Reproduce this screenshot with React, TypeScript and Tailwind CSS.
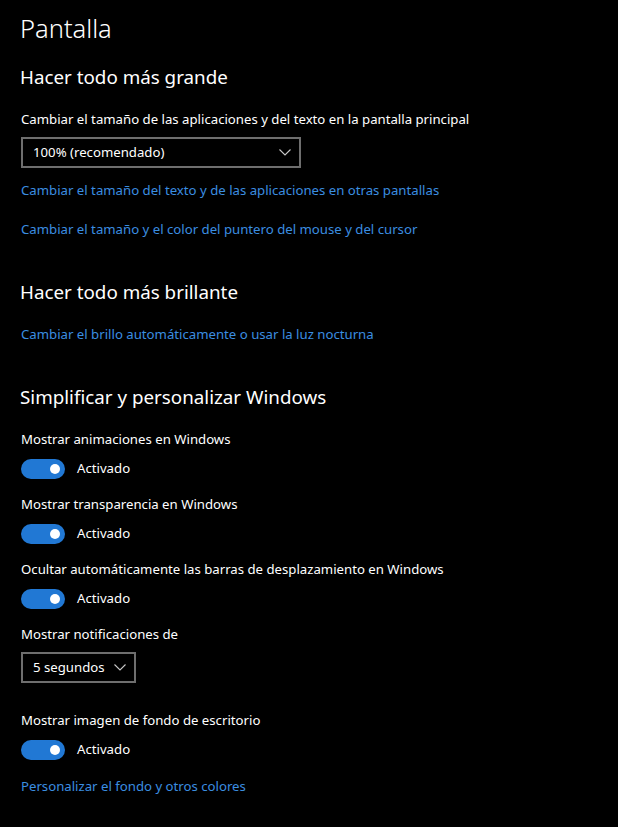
import { useState } from 'react'

function Chevron() {
  return (
    <svg width="12" height="7" viewBox="0 0 12 7" fill="none">
      <path d="M0.5 0.5l5.5 5.5 5.5-5.5" stroke="#c8c8c8" strokeWidth="1.1" />
    </svg>
  )
}

function Toggle({ label }: { label: string }) {
  const [on, setOn] = useState(true)
  return (
    <button onClick={() => setOn(!on)} className="flex items-center gap-3 h-[30px]">
      <span
        className={`flex items-center w-[44px] h-[20px] rounded-full px-[5px] ${
          on ? 'bg-[#2178d4] justify-end' : 'border-2 border-white justify-start'
        }`}
      >
        <span className="w-[10px] h-[10px] rounded-full bg-white" />
      </span>
      <span className="text-[13.2px] text-white">{on ? label : 'Desactivado'}</span>
    </button>
  )
}

function Link({ children }: { children: string }) {
  return <a className="block text-[13.2px] text-[#3b8ee0] leading-[20px] cursor-pointer">{children}</a>
}

export default function App() {
  return (
    <div
      className="min-h-screen w-[618px] bg-black text-white pl-[21px] pt-[11px] pb-8"
      style={{ fontFamily: '"Segoe UI", "Noto Sans", sans-serif' }}
    >
      <h1 className="text-[25.5px] font-light leading-[34px] -ml-[1px]">Pantalla</h1>

      <h2 className="text-[18.8px] leading-[28px] mt-[18px] -ml-[1px]">Hacer todo más grande</h2>
      <p className="text-[13.2px] leading-[20px] mt-[18px]">
        Cambiar el tamaño de las aplicaciones y del texto en la pantalla principal
      </p>
      <div className="mt-[8px] w-[280px] h-[31px] border-2 border-[#6e6e6e] flex items-center justify-between pl-[10px] pr-[8px]">
        <span className="text-[13.2px]">100% (recomendado)</span>
        <Chevron />
      </div>
      <div className="mt-[12px] flex flex-col gap-[19px]">
        <Link>Cambiar el tamaño del texto y de las aplicaciones en otras pantallas</Link>
        <Link>Cambiar el tamaño y el color del puntero del mouse y del cursor</Link>
      </div>

      <h2 className="text-[18.8px] leading-[28px] mt-[39px] -ml-[1px]">Hacer todo más brillante</h2>
      <div className="mt-[18px]">
        <Link>Cambiar el brillo automáticamente o usar la luz nocturna</Link>
      </div>

      <h2 className="text-[18.8px] leading-[28px] mt-[39px] -ml-[1px]">Simplificar y personalizar Windows</h2>
      <div className="mt-[18px] flex flex-col gap-[10px]">
        {[
          'Mostrar animaciones en Windows',
          'Mostrar transparencia en Windows',
          'Ocultar automáticamente las barras de desplazamiento en Windows',
        ].map((t) => (
          <div key={t}>
            <p className="text-[13.2px] leading-[20px]">{t}</p>
            <div className="mt-[5px]">
              <Toggle label="Activado" />
            </div>
          </div>
        ))}
      </div>

      <p className="text-[13.2px] leading-[20px] mt-[10px]">Mostrar notificaciones de</p>
      <div className="mt-[8px] w-[115px] h-[31px] border-2 border-[#6e6e6e] flex items-center justify-between pl-[10px] pr-[8px]">
        <span className="text-[13.2px]">5 segundos</span>
        <Chevron />
      </div>

      <p className="text-[13.2px] leading-[20px] mt-[27px]">Mostrar imagen de fondo de escritorio</p>
      <div className="mt-[5px]">
        <Toggle label="Activado" />
      </div>
      <div className="mt-[11px]">
        <Link>Personalizar el fondo y otros colores</Link>
      </div>
    </div>
  )
}
